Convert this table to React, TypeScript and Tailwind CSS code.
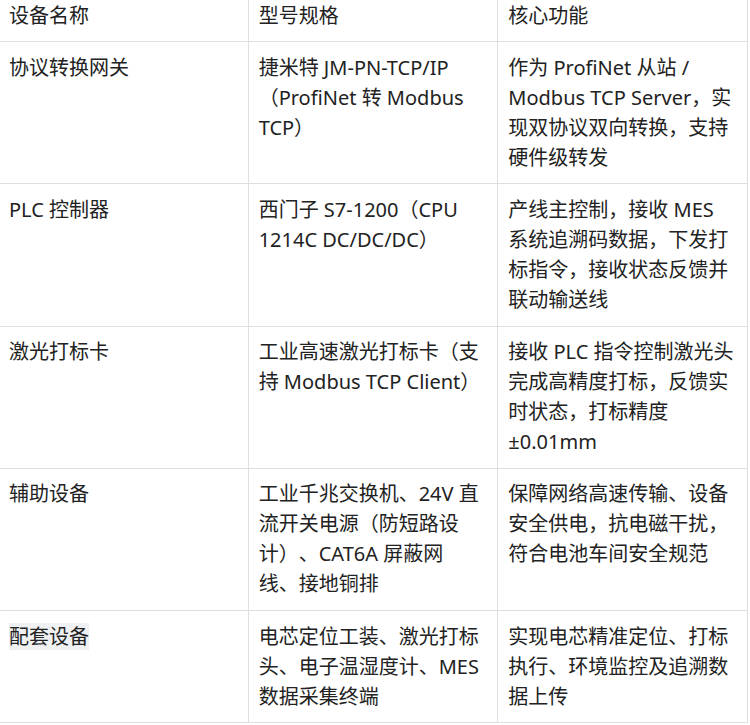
import React from "react";

interface Row {
  name: string;
  model: React.ReactNode;
  feature: string;
  highlight?: boolean;
}

const rows: Row[] = [
  {
    name: "协议转换网关",
    model: "捷米特 JM-PN-TCP/IP（ProfiNet 转 Modbus TCP）",
    feature: "作为 ProfiNet 从站 / Modbus TCP Server，实现双协议双向转换，支持硬件级转发",
  },
  {
    name: "PLC 控制器",
    model: "西门子 S7-1200（CPU 1214C DC/DC/DC）",
    feature: "产线主控制，接收 MES 系统追溯码数据，下发打标指令，接收状态反馈并联动输送线",
  },
  {
    name: "激光打标卡",
    model: "工业高速激光打标卡（支持 Modbus TCP Client）",
    feature: "接收 PLC 指令控制激光头完成高精度打标，反馈实时状态，打标精度 ±0.01mm",
  },
  {
    name: "辅助设备",
    model: (
      <>
        工业千兆交换机、24V 直流开关电源（防短路设计）、CAT6A 屏蔽网
        <br />
        线、接地铜排
      </>
    ),
    feature: "保障网络高速传输、设备安全供电，抗电磁干扰，符合电池车间安全规范",
  },
  {
    name: "配套设备",
    model: "电芯定位工装、激光打标头、电子温湿度计、MES 数据采集终端",
    feature: "实现电芯精准定位、打标执行、环境监控及追溯数据上传",
    highlight: true,
  },
];

const cell = "border border-[#dfdfdf] px-[10px] py-[10.6px] align-top text-left font-normal";

export default function App() {
  return (
    <div
      className="min-h-screen overflow-hidden bg-white text-[20px] leading-[30px] text-[#222] [text-spacing-trim:space-all]"
      style={{ fontFamily: '"Noto Sans", "Noto Sans CJK SC", sans-serif' }}
    >
      <table className="-ml-[2px] -mt-[11px] w-[750px] table-fixed border-collapse">
        <thead>
          <tr>
            <th className={cell}>设备名称</th>
            <th className={cell}>型号规格</th>
            <th className={cell}>核心功能</th>
          </tr>
        </thead>
        <tbody>
          {rows.map((r) => (
            <tr key={r.name}>
              <td className={cell}>
                <span className={r.highlight ? "bg-[#eff0f2]" : ""}>{r.name}</span>
              </td>
              <td className={cell}>{r.model}</td>
              <td className={cell}>{r.feature}</td>
            </tr>
          ))}
        </tbody>
      </table>
    </div>
  );
}
